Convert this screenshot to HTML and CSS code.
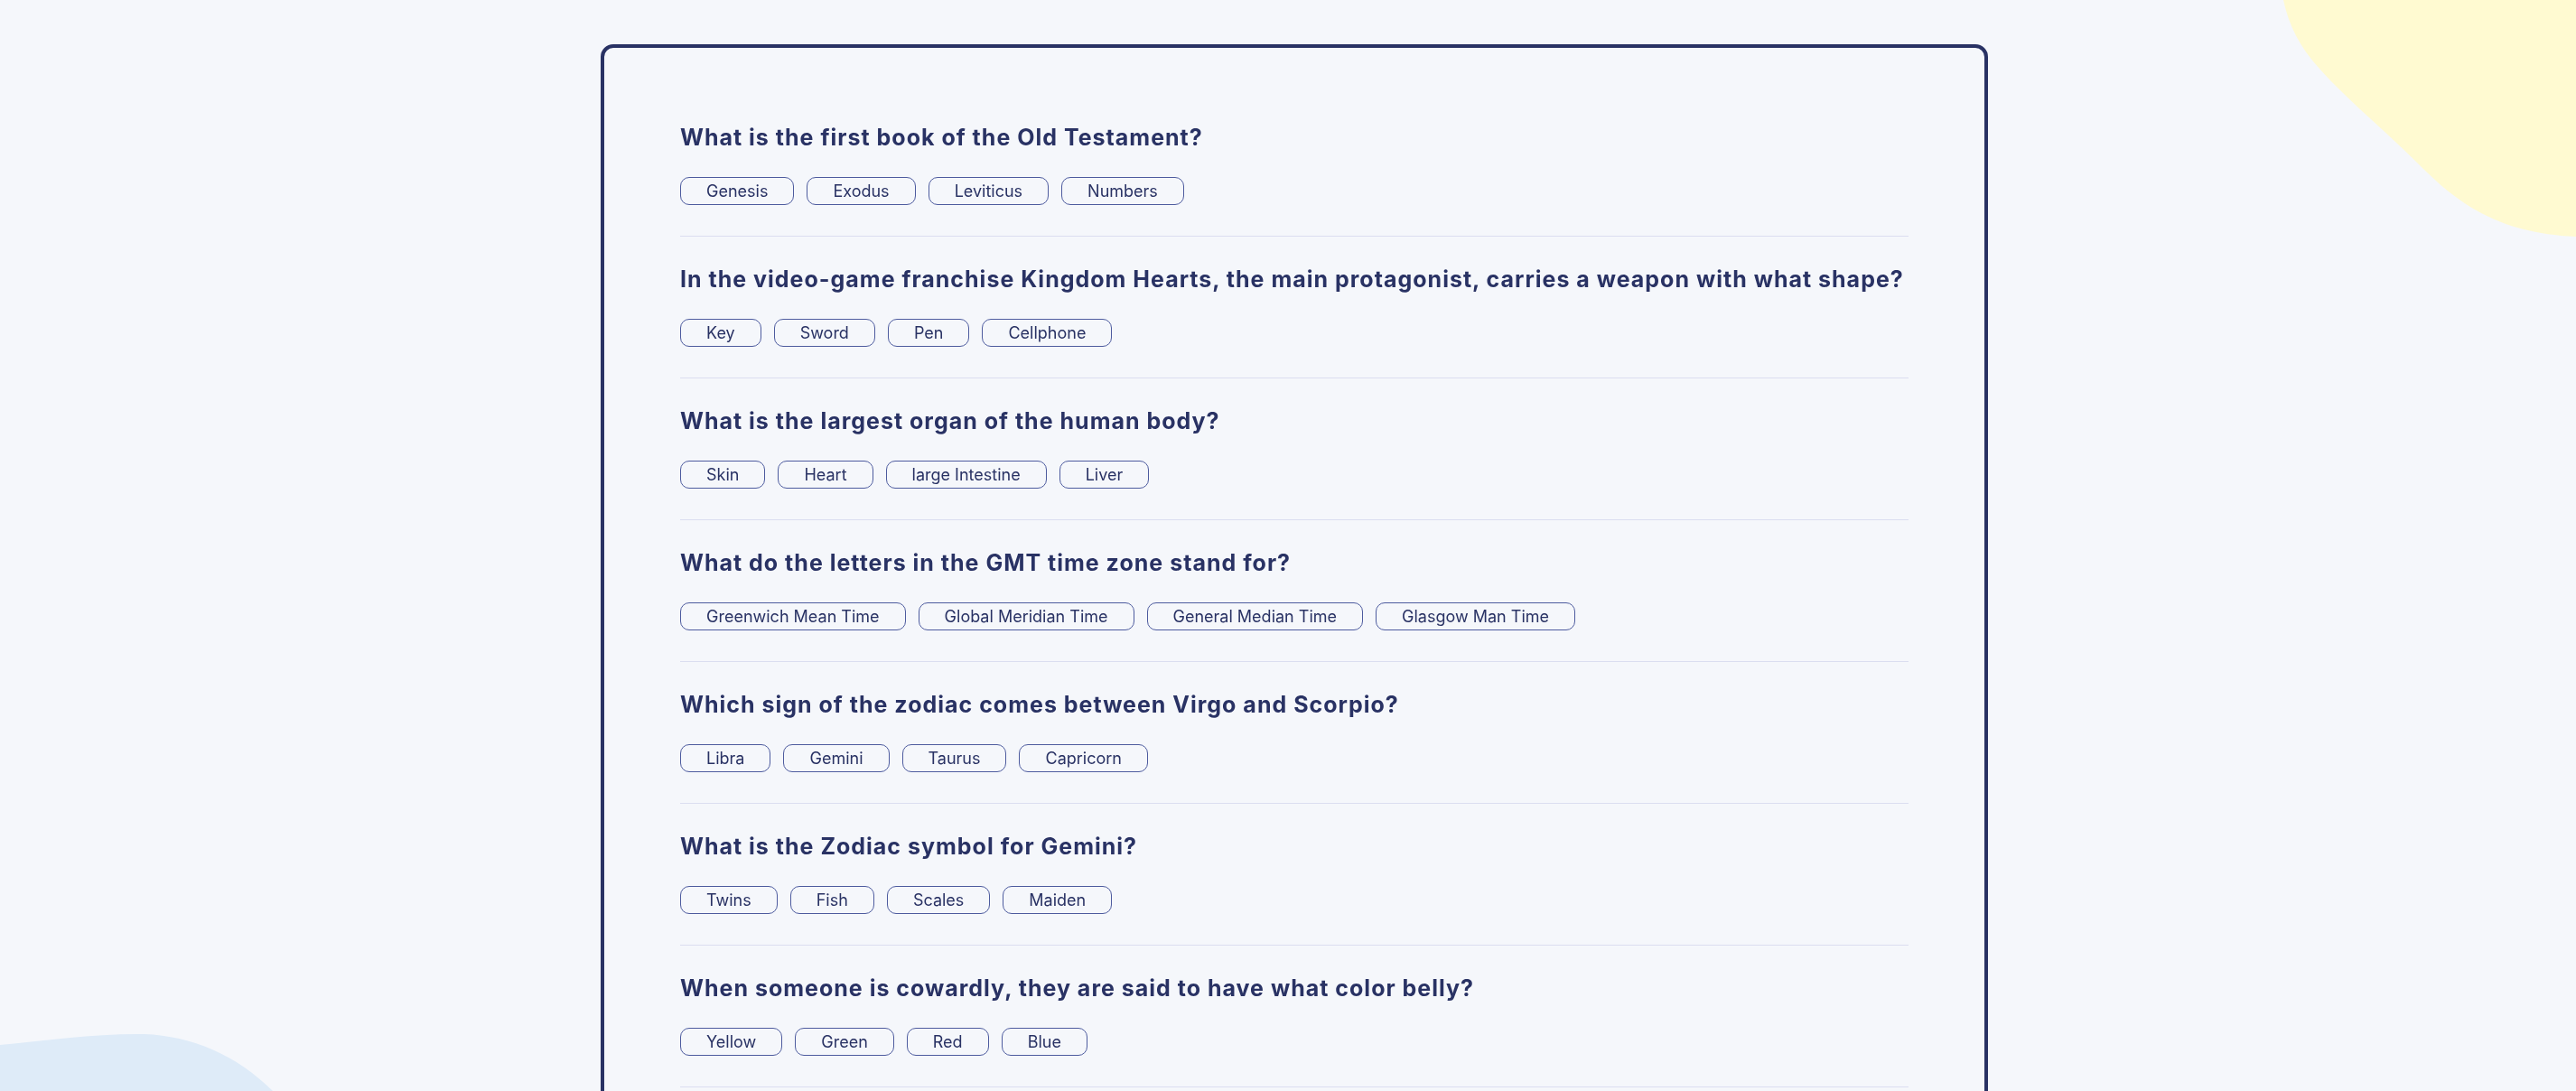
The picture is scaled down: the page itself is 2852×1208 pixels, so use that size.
FILE: index.html
```html
<!DOCTYPE html>
<html lang="en">
<head>
<meta charset="utf-8">
<title>Quizzical</title>
<link rel="stylesheet" href="styles.css">
</head>
<body>
<svg class="blob blob-yellow" width="324" height="262" viewBox="0 0 324 262" aria-hidden="true">
  <path d="M0,0 C6,28 18,52 40,76 C72,112 108,140 150,182 C192,224 236,258 324,262 L324,0 Z" fill="#FFFAD1"/>
</svg>
<svg class="blob blob-blue" width="310" height="64" viewBox="0 0 310 64" aria-hidden="true">
  <path d="M0,13 C50,8 110,0 160,1 C212,3 262,24 302,64 L0,64 Z" fill="#DEEBF8"/>
</svg>
<main class="page">
  <section class="quiz">
    <div class="question">
      <h2 class="question-title">What is the first book of the Old Testament?</h2>
      <div class="answers">
        <button class="answer">Genesis</button>
        <button class="answer">Exodus</button>
        <button class="answer">Leviticus</button>
        <button class="answer">Numbers</button>
      </div>
    </div>
    <div class="question">
      <h2 class="question-title">In the video-game franchise Kingdom Hearts, the main protagonist, carries a weapon with what shape?</h2>
      <div class="answers">
        <button class="answer">Key</button>
        <button class="answer">Sword</button>
        <button class="answer">Pen</button>
        <button class="answer">Cellphone</button>
      </div>
    </div>
    <div class="question">
      <h2 class="question-title">What is the largest organ of the human body?</h2>
      <div class="answers">
        <button class="answer">Skin</button>
        <button class="answer">Heart</button>
        <button class="answer">large Intestine</button>
        <button class="answer">Liver</button>
      </div>
    </div>
    <div class="question">
      <h2 class="question-title">What do the letters in the GMT time zone stand for?</h2>
      <div class="answers">
        <button class="answer">Greenwich Mean Time</button>
        <button class="answer">Global Meridian Time</button>
        <button class="answer">General Median Time</button>
        <button class="answer">Glasgow Man Time</button>
      </div>
    </div>
    <div class="question">
      <h2 class="question-title">Which sign of the zodiac comes between Virgo and Scorpio?</h2>
      <div class="answers">
        <button class="answer">Libra</button>
        <button class="answer">Gemini</button>
        <button class="answer">Taurus</button>
        <button class="answer">Capricorn</button>
      </div>
    </div>
    <div class="question">
      <h2 class="question-title">What is the Zodiac symbol for Gemini?</h2>
      <div class="answers">
        <button class="answer">Twins</button>
        <button class="answer">Fish</button>
        <button class="answer">Scales</button>
        <button class="answer">Maiden</button>
      </div>
    </div>
    <div class="question">
      <h2 class="question-title">When someone is cowardly, they are said to have what color belly?</h2>
      <div class="answers">
        <button class="answer">Yellow</button>
        <button class="answer">Green</button>
        <button class="answer">Red</button>
        <button class="answer">Blue</button>
      </div>
    </div>
  </section>
</main>
</body>
</html>
```
FILE: styles.css
```css
html, body {
  margin: 0;
  padding: 0;
  background: #F5F7FB;
}

body {
  min-height: 100vh;
  overflow: hidden;
  font-family: "Inter", "Liberation Sans", sans-serif;
  color: #293264;
}

.blob {
  position: fixed;
  z-index: 0;
  display: block;
}

.blob-yellow {
  top: 0;
  right: 0;
}

.blob-blue {
  bottom: 0;
  left: 0;
}

.page {
  position: relative;
  z-index: 1;
  display: flex;
  justify-content: center;
  padding: 49px 0 0 14px;
}

.quiz {
  box-sizing: border-box;
  width: 1536px;
  border: 4px solid #293264;
  border-radius: 14px;
  padding: 52px 84px 200px;
}

.question {
  padding: 32px 0 34px;
  border-bottom: 1px solid #DBDEF0;
}

.question-title {
  margin: 0 0 29px;
  font-family: "Inter", "Liberation Sans", sans-serif;
  font-weight: 700;
  font-size: 25px;
  line-height: 30px;
  letter-spacing: 1px;
  color: #293264;
}

.answers {
  display: flex;
  gap: 14px;
}

.answer {
  box-sizing: border-box;
  height: 31px;
  padding: 0 28px;
  border: 1px solid #4D5B9E;
  border-radius: 10px;
  background: transparent;
  font-family: "Inter", "Liberation Sans", sans-serif;
  font-size: 18px;
  line-height: 29px;
  color: #293264;
  cursor: pointer;
}
```
